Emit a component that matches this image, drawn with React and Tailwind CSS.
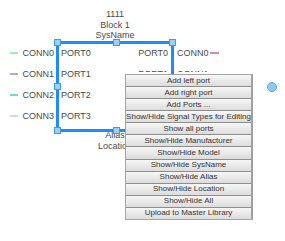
import React from 'react'

const font = { fontFamily: '"Liberation Sans", Arial, sans-serif' }

const leftConns = [
  { name: 'CONN0', color: 'bg-[#9ef0b4]' },
  { name: 'CONN1', color: 'bg-[#9fb3d6]' },
  { name: 'CONN2', color: 'bg-[#6fdcc4]' },
  { name: 'CONN3', color: 'bg-[#d8d0f4]' },
]

const menuItems = [
  'Add left port',
  'Add right port',
  'Add Ports ...',
  'Show/Hide Signal Types for Editing',
  'Show all ports',
  'Show/Hide Manufacturer',
  'Show/Hide Model',
  'Show/Hide SysName',
  'Show/Hide Alias',
  'Show/Hide Location',
  'Show/Hide All',
  'Upload to Master Library',
]

function Handle({ className }) {
  return (
    <div
      className={`absolute w-[7px] h-[7px] bg-[#9fd0f2] border border-[#3b9cf5] ${className}`}
    />
  )
}

function Block() {
  return (
    <div className="absolute left-[10px] top-[9px] flex flex-col items-start text-[9px] text-[#4a4a4a]">
      {/* labels above */}
      <div className="ml-[46px] w-[118px] flex flex-col items-center leading-[10.5px]">
        <span>1111</span>
        <span>Block 1</span>
        <span>SysName</span>
      </div>

      <div className="flex">
        {/* left connectors */}
        <div className="w-[44px] h-[91px] flex flex-col justify-between pt-[6px] pb-[9px] mr-[2px]">
          {leftConns.map((c) => (
            <div key={c.name} className="h-[12px] flex items-center">
              <div className={`w-[9px] h-[2px] ${c.color}`} />
              <span className="ml-[4px] leading-[12px]">{c.name}</span>
            </div>
          ))}
        </div>

        {/* block box */}
        <div className="relative w-[118px] h-[91px] border-[3px] border-[#1e8cff]">
          <div className="h-full flex flex-col justify-between pt-[3px] pb-[6px] pl-[2px]">
            <span className="h-[12px] leading-[12px]">PORT0</span>
            <span className="h-[12px] leading-[12px]">PORT1</span>
            <span className="h-[12px] leading-[12px]">PORT2</span>
            <span className="h-[12px] leading-[12px]">PORT3</span>
          </div>
          <div className="absolute right-[3px] top-0 flex flex-col pt-[3px]">
            <span className="h-[12px] leading-[12px]">PORT0</span>
            {/* partly hidden under the menu */}
            <div className="mt-[9px] h-[4px] overflow-hidden">
              <span className="block h-[12px] leading-[12px]">PORT1</span>
            </div>
          </div>
          <Handle className="left-[-5px] top-[-5px]" />
          <Handle className="left-[54px] top-[-5px]" />
          <Handle className="right-[-5px] top-[-5px]" />
          <Handle className="left-[-5px] top-[39px]" />
          <Handle className="left-[-5px] bottom-[-5px]" />
          <Handle className="left-[54px] bottom-[-5px]" />
        </div>

        {/* right connectors */}
        <div className="h-[91px] flex flex-col pt-[6px] ml-[3px]">
          <div className="h-[12px] flex items-center">
            <span className="leading-[12px]">CONN0</span>
            <div className="ml-[1px] w-[9px] h-[2px] bg-[#c98ccc]" />
          </div>
          <div className="mt-[9px] h-[4px] overflow-hidden">
            <div className="h-[12px] flex items-center">
              <span className="leading-[12px]">CONN1</span>
              <div className="ml-[1px] w-[9px] h-[2px] bg-[#9fb3d6]" />
            </div>
          </div>
        </div>
      </div>

      {/* labels below */}
      <div className="ml-[46px] w-[118px] flex flex-col items-center leading-[11.5px] mt-[-2px]">
        <span>Alias</span>
        <span>Location</span>
      </div>
    </div>
  )
}

function ContextMenu() {
  return (
    <div className="absolute left-[125px] top-[74px] w-[128px] h-[146px] flex flex-col border border-[#a4a4a4] border-r-2 border-r-[#a0a0a0] bg-[#e4e4e4] text-[8px] text-[#333]">
      {menuItems.map((item) => (
        <div
          key={item}
          className="flex-1 flex items-center justify-center whitespace-nowrap border-b border-[#8e8e8e] last:border-b-0 bg-gradient-to-b from-[#f7f7f7] to-[#dcdcdc] leading-none"
        >
          {item}
        </div>
      ))}
    </div>
  )
}

export default function App() {
  return (
    <div className="relative w-[285px] h-[241px] bg-white overflow-hidden" style={font}>
      <Block />
      <ContextMenu />
      <div className="absolute left-[267px] top-[82px] w-[10px] h-[10px] rounded-full bg-[#8fcaec] border border-[#5aa9dc]" />
    </div>
  )
}
